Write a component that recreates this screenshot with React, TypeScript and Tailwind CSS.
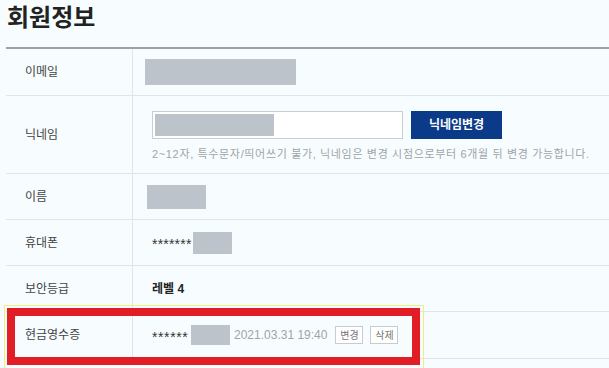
import React from 'react'

const font = { fontFamily: '"Liberation Sans", "Noto Sans CJK KR", sans-serif' }

function Redacted({ className }: { className: string }) {
  return <span className={`inline-block bg-[#bdc3ca] ${className}`} />
}

function Row({ label, height, children }: { label: string; height: string; children: React.ReactNode }) {
  return (
    <div className={`flex border-b border-[#dde5ee] ${height}`}>
      <div className="w-[127px] shrink-0 border-r border-[#dde5ee] flex items-center pl-[19px] text-[12px] text-[#444]">
        {label}
      </div>
      <div className="flex-1 flex items-center">{children}</div>
    </div>
  )
}

export default function App() {
  return (
    <div className="relative w-[609px] h-[368px] overflow-hidden bg-[#f7fdff]" style={font}>
      <h1 className="h-[47px] pl-[7px] pt-[3px] text-[24px] leading-[30px] font-bold text-[#222]">회원정보</h1>

      <div className="ml-[6px] border-t-2 border-[#9da1a6]">
        <Row label="이메일" height="h-[47px]">
          <Redacted className="ml-[12px] w-[151px] h-[26px]" />
        </Row>

        <Row label="닉네임" height="h-[78px]">
          <div className="pl-[19px] pt-[1px]">
            <div className="flex items-center gap-[8px]">
              <div className="w-[251px] h-[28px] border border-[#c9ced4] bg-white p-[2px]">
                <div className="w-[119px] h-full bg-[#bdc3ca]" />
              </div>
              <button className="w-[91px] h-[28px] bg-[#0b3a88] text-white text-[12px] font-bold">닉네임변경</button>
            </div>
            <p className="mt-[9px] text-[11px] leading-[12px] tracking-[0.65px] text-[#a0a4a8] whitespace-nowrap">
              2~12자, 특수문자/띄어쓰기 불가, 닉네임은 변경 시점으로부터 6개월 뒤 변경 가능합니다.
            </p>
          </div>
        </Row>

        <Row label="이름" height="h-[46px]">
          <Redacted className="ml-[14px] w-[59px] h-[24px]" />
        </Row>

        <Row label="휴대폰" height="h-[46px]">
          <div className="pl-[19px] flex items-center">
            <span className="w-[41px] text-[14px] leading-[14px] pt-[3px] text-[#333] tracking-[0.2px] overflow-hidden whitespace-nowrap">*******</span>
            <Redacted className="w-[39px] h-[22px] mt-[1px]" />
          </div>
        </Row>

        <Row label="보안등급" height="h-[46px]">
          <span className="pl-[19px] text-[12px] font-bold text-[#222]">레벨 4</span>
        </Row>

        <Row label="현금영수증" height="h-[47px]">
          <div className="pl-[19px] flex items-center">
            <span className="w-[39px] text-[14px] leading-[14px] pt-[3px] text-[#333] tracking-[0.6px] overflow-hidden whitespace-nowrap">******</span>
            <Redacted className="w-[39px] h-[20px]" />
            <span className="ml-[4px] text-[12px] text-[#a0a4a8]">2021.03.31 19:40</span>
            <button className="ml-[8px] w-[28px] h-[18px] border border-[#c8ccd0] bg-white text-[10px] text-[#777]">변경</button>
            <button className="ml-[7px] w-[28px] h-[18px] border border-[#c8ccd0] bg-white text-[10px] text-[#777]">삭제</button>
          </div>
        </Row>
      </div>

      {/* annotation overlay */}
      <div className="absolute left-[4px] top-[305px] w-[420px] h-[64px] border border-[#eef07a]" />
      <div className="absolute left-[7px] top-[308px] w-[413px] h-[57px] border-[8px] border-[#e11d25]" />
    </div>
  )
}
